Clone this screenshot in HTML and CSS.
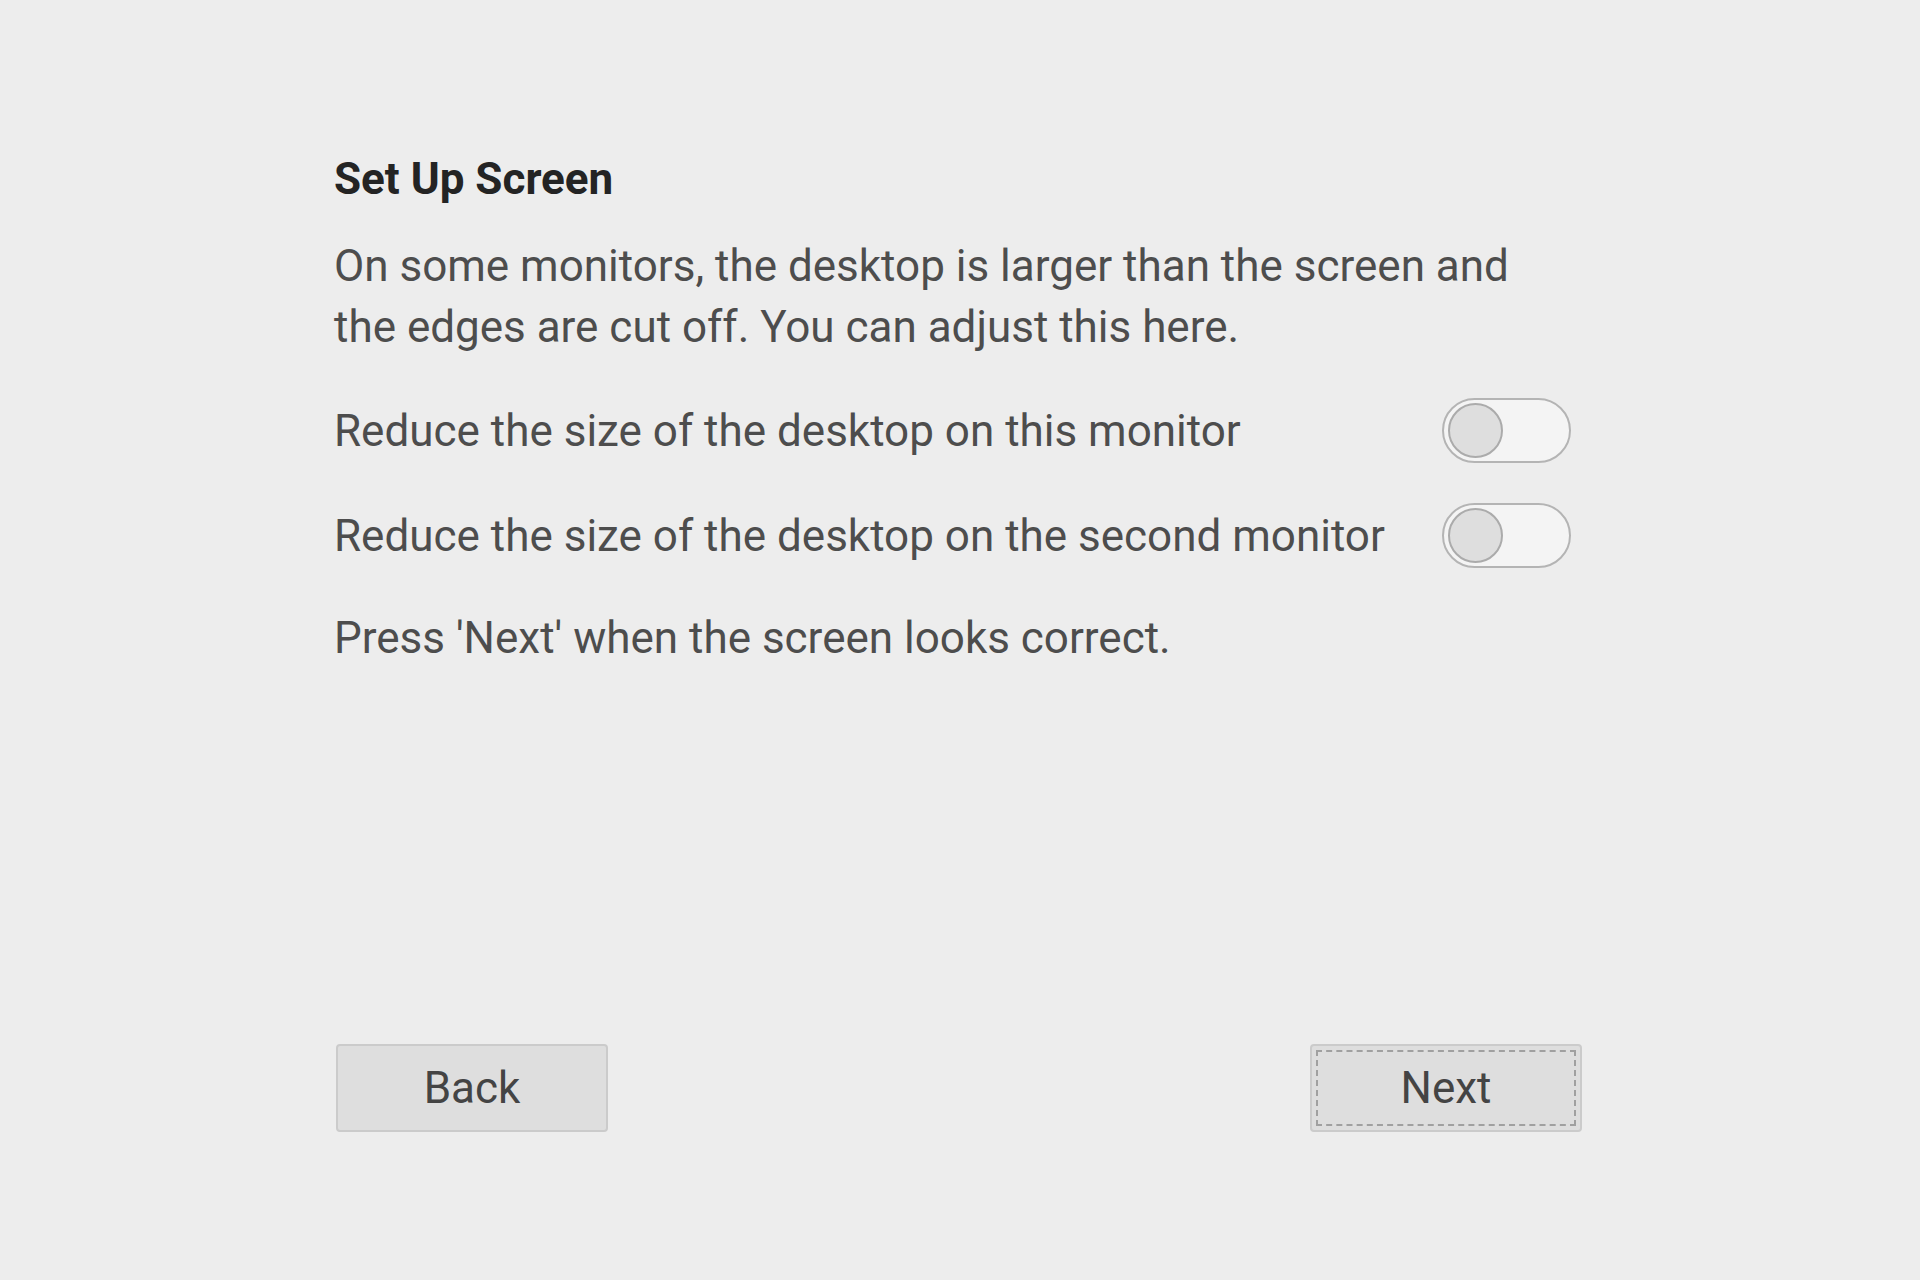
FILE: index.html
```html
<!DOCTYPE html>
<html lang="en">
<head>
    <meta charset="UTF-8">
    <meta name="viewport" content="width=device-width, initial-scale=1.0">
    <title>Set Up Screen</title>
    <link rel="stylesheet" href="styles.css">
</head>
<body>

<div class="wizard">
    <h1 class="titulo">Set Up Screen</h1>

    <p class="texto">
        On some monitors, the desktop is larger than the screen and<br>
        the edges are cut off. You can adjust this here.
    </p>

    <!-- Opções de ajuste -->
    <div class="linha">
        <span>Reduce the size of the desktop on this monitor</span>
        <label class="switch">
            <input type="checkbox" id="blank1">
            <span class="knob"></span>
        </label>
    </div>

    <div class="linha">
        <span>Reduce the size of the desktop on the second monitor</span>
        <label class="switch">
            <input type="checkbox" id="blank2">
            <span class="knob"></span>
        </label>
    </div>

    <p class="texto aviso">Press 'Next' when the screen looks correct.</p>

    <!-- Botões de navegação -->
    <div class="botoes">
        <button class="btn" id="btnBack">Back</button>
        <button class="btn foco" id="btnNext"><span class="foco-borda">Next</span></button>
    </div>
</div>

</body>
</html>
```

FILE: styles.css
```css
body {
    font-family: 'Roboto', 'Liberation Sans', sans-serif;
    background-color: #ededed;
    margin: 0;
    padding: 0;
    height: 100vh;
    color: #4d4d4d;
}

.wizard {
    width: 1248px;
    margin-left: 334px;
    padding-top: 157px;
    display: flex;
    flex-direction: column;
}

.titulo {
    font-size: 44px;
    line-height: 44px;
    font-weight: bold;
    color: #242424;
    margin: 0;
}

.texto {
    font-size: 44px;
    line-height: 61px;
    margin: 35px 0 0 0;
}

.linha {
    display: flex;
    justify-content: space-between;
    align-items: center;
    font-size: 44px;
    height: 65px;
    width: 1237px;
    margin-top: 40px;
}

.aviso {
    margin-top: 40px;
}

/* Switch */
.switch {
    position: relative;
    width: 129px;
    height: 65px;
    box-sizing: border-box;
    border: 2px solid #b4b4b4;
    border-radius: 33px;
    background-color: #f4f4f4;
}

.switch input {
    display: none;
}

.knob {
    position: absolute;
    left: 4px;
    top: 3px;
    width: 55px;
    height: 55px;
    box-sizing: border-box;
    border: 2px solid #ababab;
    border-radius: 50%;
    background-color: #dedede;
}

.botoes {
    display: flex;
    justify-content: space-between;
    margin-top: 375px;
    padding-left: 2px;
}

.btn {
    width: 272px;
    height: 88px;
    background-color: #dedede;
    border: 2px solid #cbcbcb;
    border-radius: 4px;
    font-family: 'Roboto', sans-serif;
    font-size: 44px;
    color: #444;
    padding: 0;
    cursor: pointer;
}

.foco {
    padding: 4px;
}

.foco-borda {
    display: flex;
    justify-content: center;
    align-items: center;
    height: 100%;
    border: 2px dashed #a0a0a0;
    box-sizing: border-box;
}
```
